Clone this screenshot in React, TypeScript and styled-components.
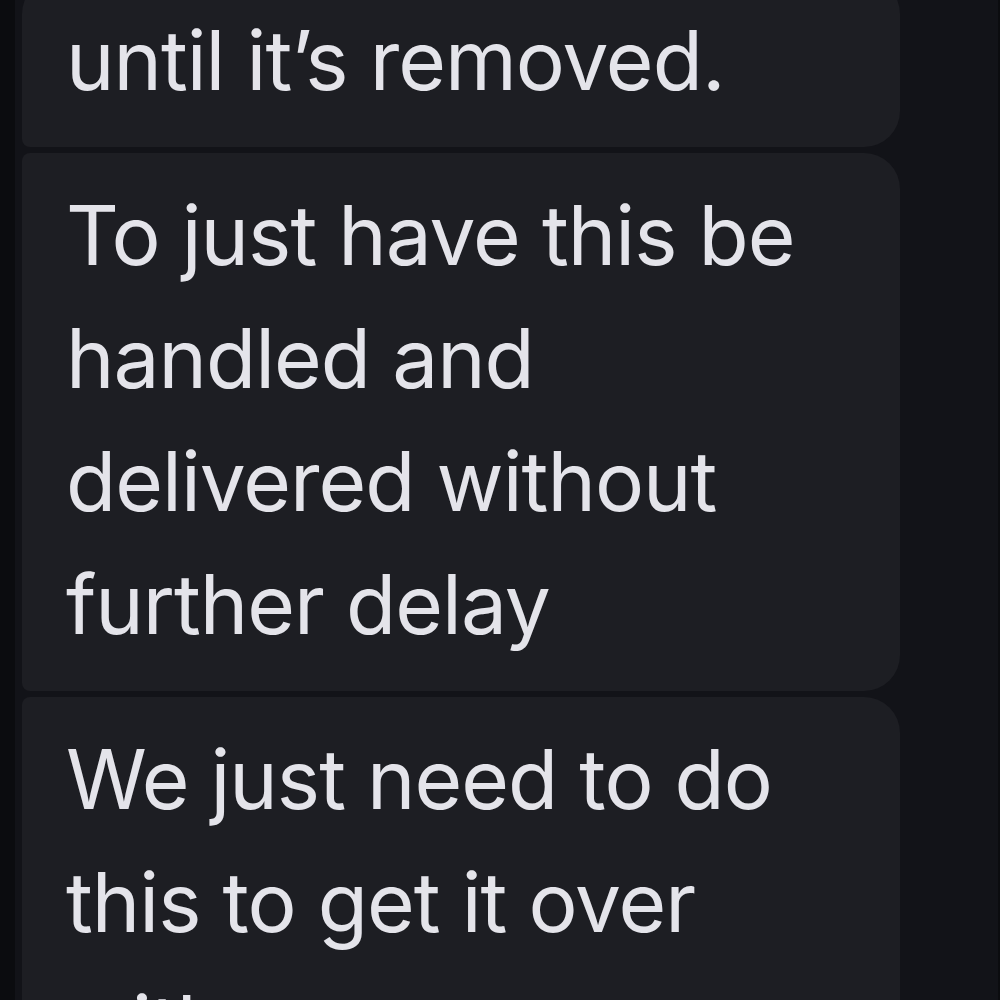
import React from "react";
import styled, { createGlobalStyle } from "styled-components";

const Global = createGlobalStyle`
  html, body {
    margin: 0;
    padding: 0;
    background: #121318;
    overflow: hidden;
  }
  * { box-sizing: border-box; }
`;

const Screen = styled.div`
  display: flex;
  width: 1000px;
  height: 1000px;
  overflow: hidden;
  background: #121318;
`;

const LeftRail = styled.div`
  flex: 0 0 15px;
  background: #0b0c0f;
`;

const RightRail = styled.div`
  flex: 0 0 2px;
  background: #0b0c0f;
`;

const Thread = styled.div`
  flex: 1;
  display: flex;
  flex-direction: column;
  gap: 6px;
  padding: 0 96px 0 7px;
  margin-top: -22px;
`;

type Pos = "first" | "middle" | "last";

const Bubble = styled.div<{ $pos: Pos }>`
  width: 878px;
  background: #1d1e23;
  color: #e4e4ea;
  font-family: "Inter", "Roboto", sans-serif;
  font-size: 82px;
  letter-spacing: -1px;
  line-height: 123px;
  padding: 21px 40px 25px 44px;
  white-space: pre-line;
  border-radius: ${({ $pos }) =>
    $pos === "first"
      ? "36px 36px 36px 8px"
      : $pos === "middle"
      ? "8px 36px 36px 8px"
      : "8px 36px 36px 36px"};
`;

const messages: { pos: Pos; text: string }[] = [
  { pos: "first", text: "until it’s removed." },
  {
    pos: "middle",
    text: "To just have this be\nhandled and\ndelivered without\nfurther delay",
  },
  { pos: "last", text: "We just need to do\nthis to get it over\nwith" },
];

export default function App() {
  return (
    <>
      <Global />
      <Screen>
        <LeftRail />
        <Thread>
          {messages.map((m, i) => (
            <Bubble key={i} $pos={m.pos}>
              {m.text}
            </Bubble>
          ))}
        </Thread>
        <RightRail />
      </Screen>
    </>
  );
}
